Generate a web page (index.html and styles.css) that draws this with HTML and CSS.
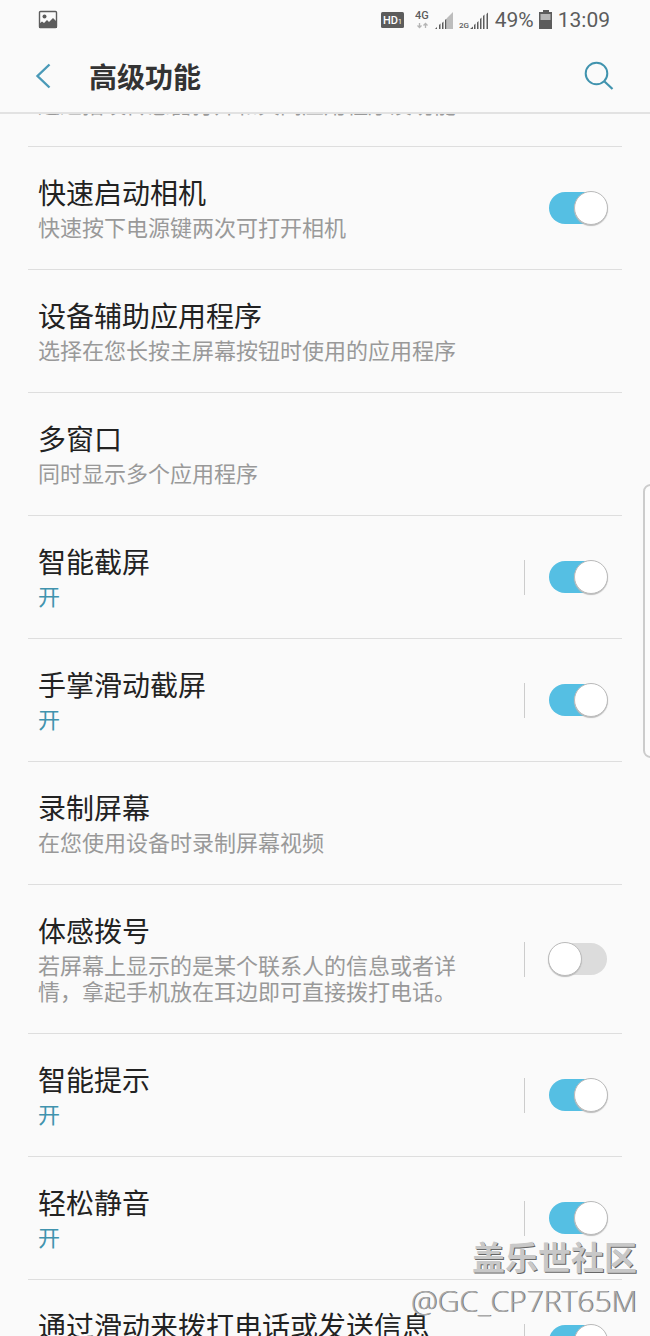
FILE: index.html
```
<!DOCTYPE html>
<html lang="zh-CN">
<head>
<meta charset="utf-8">
<meta name="viewport" content="width=device-width, initial-scale=1">
<title>高级功能</title>
<link rel="stylesheet" href="styles.css">
</head>
<body>
<div class="screen">

  <div class="top">
    <div class="status">
      <svg class="picture" width="20" height="20" viewBox="0 0 20 20">
        <rect x="1.5" y="1.5" width="17" height="16" rx="1" fill="none" stroke="#5c5c5c" stroke-width="1.4"/>
        <circle cx="6.5" cy="6.5" r="2" fill="#5c5c5c"/>
        <path d="M1 14l3-2.500 2 1.500 3-3 2 2 4-4 4 4v6H1z" fill="#5c5c5c"/>
      </svg>
      <svg class="hd" width="24" height="18" viewBox="0 0 24 18">
        <rect x="0" y="1" width="23" height="16" rx="1.500" fill="#5c5c5c"/>
        <text x="2" y="13" font-size="11" font-weight="500" fill="#fff">HD</text>
        <text x="17" y="13" font-size="7" fill="#fff">1</text>
      </svg>
      <svg class="net" width="16" height="20" viewBox="0 0 16 20">
        <text x="0" y="9" font-size="11" font-weight="500" fill="#5c5c5c">4G</text>
        <path d="M4.500 13v4M2.500 15.500l2 2 2-2M10.500 18v-4M8.500 15.500l2-2 2 2" fill="none" stroke="#b5b5b5" stroke-width="1.300"/>
      </svg>
      <svg class="signal" width="20" height="20" viewBox="0 0 20 20">
        <path d="M13 19V8l6-6v17z" fill="#bdbdbd"/>
        <path d="M1 19l2-2v2zM5 19v-4l1.500-1.500V19zM8 19v-6l1.500-1.500V19zM11 19v-9l1.500-1.500V19z" fill="#5c5c5c"/>
      </svg>
      <svg class="signal2" width="32" height="20" viewBox="0 0 32 20">
        <text x="0" y="18" font-size="8" font-weight="500" fill="#5c5c5c">2G</text>
        <path d="M11 19l3-2.500V19zM15 19v-4l1.500-1.500V19zM18 19v-6.500l1.500-1.500v8zM21 19V9l1.500-1.500V19zM24 19V6l1.500-1.500V19zM27.500 19V4L29 2.500V19z" fill="#5c5c5c"/>
      </svg>
      <span class="percent">49%</span>
      <svg class="battery" width="14" height="20" viewBox="0 0 14 20">
        <path d="M4 0h6v2h3v17H0V2h4z" fill="#5c5c5c"/>
        <path d="M1.500 4h10v6h-10z" fill="#b5b5b5"/>
      </svg>
      <span class="clock">13:09</span>
    </div>

    <div class="header">
      <button class="icon-btn back" aria-label="返回">
        <svg width="16" height="28" viewBox="0 0 16 28"><path d="M14.500 2.500L2.500 14l12 11.500" fill="none" stroke="#4a9ab8" stroke-width="2.400"/></svg>
      </button>
      <h1>高级功能</h1>
      <button class="icon-btn" aria-label="搜索">
        <svg width="30" height="30" viewBox="0 0 30 30"><circle cx="12.500" cy="12.500" r="10.800" fill="none" stroke="#4093ae" stroke-width="2"/><path d="M20.500 20.500l8 7.500" stroke="#4093ae" stroke-width="2.200"/></svg>
      </button>
    </div>
  </div>

  <div class="list">
    <div class="row scrolled">
      <a class="text" href="#"><span class="desc">通过指纹传感器打开和关闭应用程序及功能</span></a>
    </div>
    <div class="row">
      <label class="text" for="camera"><span class="name">快速启动相机</span><span class="desc">快速按下电源键两次可打开相机</span></label>
      <input class="switch" type="checkbox" id="camera" checked>
    </div>
    <div class="row">
      <a class="text" href="#"><span class="name">设备辅助应用程序</span><span class="desc">选择在您长按主屏幕按钮时使用的应用程序</span></a>
    </div>
    <div class="row">
      <a class="text" href="#"><span class="name">多窗口</span><span class="desc">同时显示多个应用程序</span></a>
    </div>
    <div class="row split">
      <label class="text" for="capture"><span class="name">智能截屏</span><span class="desc on">开</span></label>
      <input class="switch" type="checkbox" id="capture" checked>
    </div>
    <div class="row split">
      <label class="text" for="palm"><span class="name">手掌滑动截屏</span><span class="desc on">开</span></label>
      <input class="switch" type="checkbox" id="palm" checked>
    </div>
    <div class="row">
      <a class="text" href="#"><span class="name">录制屏幕</span><span class="desc">在您使用设备时录制屏幕视频</span></a>
    </div>
    <div class="row split">
      <label class="text" for="dial"><span class="name">体感拨号</span><span class="desc">若屏幕上显示的是某个联系人的信息或者详情，拿起手机放在耳边即可直接拨打电话。</span></label>
      <input class="switch" type="checkbox" id="dial">
    </div>
    <div class="row split">
      <label class="text" for="alert"><span class="name">智能提示</span><span class="desc on">开</span></label>
      <input class="switch" type="checkbox" id="alert" checked>
    </div>
    <div class="row split">
      <label class="text" for="mute"><span class="name">轻松静音</span><span class="desc on">开</span></label>
      <input class="switch" type="checkbox" id="mute" checked>
    </div>
    <div class="row split">
      <label class="text" for="swipe"><span class="name">通过滑动来拨打电话或发送信息</span><span class="desc on">开</span></label>
      <input class="switch" type="checkbox" id="swipe" checked>
    </div>
  </div>

  <div class="edge"></div>
  <div class="watermark">
    <div class="site">盖乐世社区</div>
    <div class="user">@GC_CP7RT65M</div>
  </div>
</div>
</body>
</html>
```
FILE: styles.css
```
* { box-sizing: border-box; }

body {
  margin: 0;
  background: #fafafa;
  color: #222;
  font-family: "Noto Sans CJK SC", sans-serif;
}

.screen {
  position: relative;
  height: 100vh;
  overflow: hidden;
}

/* status bar and title stay above the scrolled list */
.top {
  position: relative;
  z-index: 1;
  background: #fafafa;
  border-bottom: 2px solid #e2e2e2;
}

.status {
  display: flex;
  align-items: center;
  height: 40px;
  padding: 0 40px 0 38px;
  color: #5c5c5c;
  font-family: Roboto, sans-serif;
  font-size: 21px;
}
.picture { margin-right: auto; }
.hd { margin-right: 10px; }
.net { margin-right: 3px; }
.signal { margin-right: 5px; }
.signal2 { margin-right: 4px; }
.battery { margin: 0 5px; }

.header {
  display: flex;
  align-items: center;
  height: 72px;
  padding: 0 36px 0 35px;
}
.header h1 {
  flex: 1;
  margin: 0;
  color: #333;
  font-size: 28px;
  font-weight: 700;
  line-height: 40px;
}
.icon-btn {
  display: flex;
  padding: 0;
  border: 0;
  background: none;
}
.back { margin-right: 38px; }

.list {
  margin: -24px 28px 0;
}
.row {
  display: flex;
  align-items: center;
  padding: 0 15px 0 10px;
  border-bottom: 1px solid #dedede;
}
.text {
  flex: 1;
  padding: 26px 0 30px;
  color: inherit;
  text-decoration: none;
}
.scrolled .text { padding-top: 0; }
.name {
  display: block;
  margin-bottom: 2px;
  font-size: 28px;
  line-height: 38px;
}
.desc {
  display: block;
  color: #999;
  font-size: 22px;
  line-height: 26px;
}
.on { color: #4093ae; }

.switch {
  appearance: none;
  display: flex;
  align-items: center;
  width: 58px;
  height: 32px;
  margin: 0;
  border-radius: 16px;
  background: #dcdcdc;
}
.switch::before {
  content: "";
  flex: none;
  width: 32px;
  height: 32px;
  margin: 0 -1px;
  border: 1px solid #bbb;
  border-radius: 50%;
  background: #fff;
  box-shadow: 0 1px 1px #bbb;
}
.switch:checked {
  justify-content: flex-end;
  background: #55bfe3;
}

/* thin bar between the text and its switch */
.split::after {
  content: "";
  order: 1;
  width: 1px;
  height: 35px;
  margin: 0 24px 0 56px;
  background: #ccc;
}
.split .switch { order: 2; }

.edge {
  position: absolute;
  top: 484px;
  right: -8px;
  width: 15px;
  height: 274px;
  border: 2px solid #ccc;
  border-radius: 8px;
  background: #fcfcfc;
}

.watermark {
  position: absolute;
  right: 13px;
  bottom: 14px;
  z-index: 2;
  text-align: right;
  pointer-events: none;
}
.site {
  margin-bottom: 2px;
  color: #c8c8c8;
  font-size: 33px;
  font-weight: 700;
  line-height: 44px;
  text-shadow: 1px 1px #666;
}
.user {
  color: #aaa;
  font-family: "Open Sans", sans-serif;
  font-size: 30px;
  font-weight: 300;
  line-height: 42px;
  text-shadow: 1px 0 #777;
}
```
